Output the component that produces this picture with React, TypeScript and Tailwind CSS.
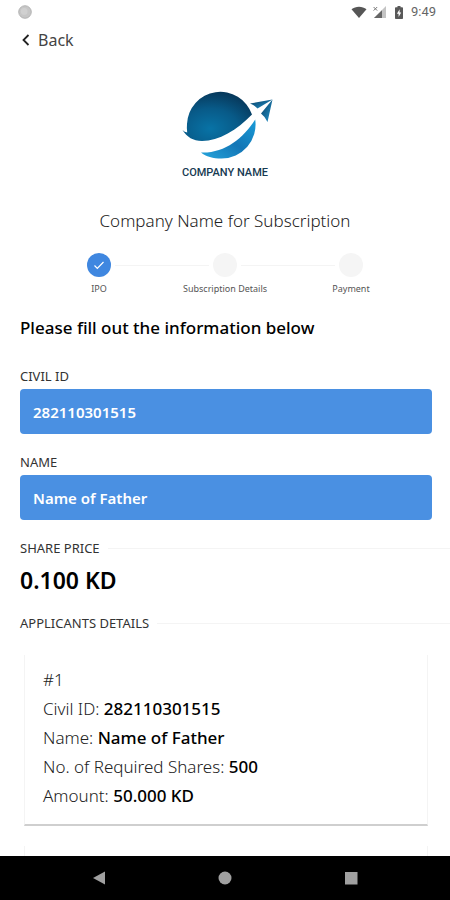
import { useState } from 'react'

const steps = ['IPO', 'Subscription Details', 'Payment']

const applicants = [
    { civilId: '282110301515', name: 'Name of Father', shares: '500', amount: '50.000 KD' },
]

function StatusBar() {
    return (
        <div className="flex h-6 shrink-0 items-center justify-between pl-[18px] pr-[14px]">
            <svg className="size-[14px]" viewBox="0 0 14 14">
                <circle cx="7" cy="7" r="6.3" fill="#c6c6c6" stroke="#b0b0b0" strokeWidth="0.9" />
                <circle cx="6.2" cy="6.4" r="3.4" fill="#d0d0d0" />
            </svg>
            <div className="flex items-center">
                <svg className="h-3 w-4" viewBox="0 0 16 12">
                    <path d="M0.5 3.2C4.6-0.2 11.4-0.2 15.5 3.2L8 12Z" fill="#565656" />
                </svg>
                <svg className="ml-[6px] h-3 w-[14px]" viewBox="0 0 14 12">
                    <path d="M13 0V12H1Z" fill="#c4c4c4" />
                    <path d="M9 4.2V12H1Z" fill="#666" />
                    <path d="M0.6 1L4.2 4.6M4.2 1L0.6 4.6" stroke="#777" strokeWidth="1" />
                </svg>
                <svg className="ml-2 h-[13px] w-2" viewBox="0 0 8 13">
                    <path d="M2.5 0H5.5V1.3H7.2Q8 1.3 8 2.2V12.2Q8 13 7.2 13H0.8Q0 13 0 12.2V2.2Q0 1.3 0.8 1.3H2.5Z" fill="#595959" />
                    <path d="M4.6 3.2L1.9 7.8H3.6V11L6.2 6.4H4.6Z" fill="#fff" />
                </svg>
                <span className="ml-2 font-['Roboto',sans-serif] text-[13px] leading-4 text-[#666]">9:49</span>
            </div>
        </div>
    )
}

function Logo() {
    return (
        <svg className="h-[72px] w-[96px]" viewBox="0 0 96 72" role="img" aria-label="Company Name">
            <defs>
                <radialGradient id="globe" cx="0.4" cy="0.75" r="0.75">
                    <stop offset="0" stopColor="#0873a6" />
                    <stop offset="0.55" stopColor="#085a88" />
                    <stop offset="1" stopColor="#07395c" />
                </radialGradient>
                <linearGradient id="swoosh" x1="0" y1="1" x2="1" y2="0">
                    <stop offset="0" stopColor="#25a5dc" />
                    <stop offset="0.5" stopColor="#1376b6" />
                    <stop offset="1" stopColor="#1a9cd8" />
                </linearGradient>
                <linearGradient id="wing" x1="0" y1="0" x2="1" y2="1">
                    <stop offset="0" stopColor="#0a3c60" />
                    <stop offset="1" stopColor="#2196cf" />
                </linearGradient>
            </defs>
            <path
                d="M5.5 42C10 49 16 53 25 53C42 53 60 42 75 26.5A33.4 33.4 0 0 0 10 36Q9.600 40 10.200 44.500Q7.500 44.300 5.500 42Z"
                fill="url(#globe)"
            />
            <path d="M78.200 31.500A34 34 0 0 1 44.500 70.500C36 70.500 29 68.500 24 64.500C47 65.500 66 51 78.200 31.500Z" fill="url(#swoosh)" />
            <path d="M73 15.500L95.500 11.500L80.500 20.500Q77.500 17 73 15.500Z" fill="url(#wing)" />
            <path d="M95.500 11.500L90.500 34Q88.500 29 84 25.500Z" fill="url(#wing)" />
        </svg>
    )
}

function Stepper({ current }: { current: number }) {
    return (
        <ol className="mx-9 mt-5 grid grid-cols-3">
            {steps.map((step, i) => (
                <li key={step} className="relative flex flex-col items-center">
                    {i > 0 && <span className="absolute right-1/2 top-3 mr-4 h-px w-[calc(100%-32px)] bg-[#f4f4f4]" />}
                    {i === current ? (
                        <span className="flex size-6 items-center justify-center rounded-full bg-[#3f87e0]">
                            <svg className="size-3" viewBox="0 0 12 12" fill="none">
                                <path d="M1.500 6.500L4.300 9.300L10.500 3" stroke="#fff" strokeWidth="1.200" />
                            </svg>
                        </span>
                    ) : (
                        <span className="size-6 rounded-full bg-[#f5f5f5]" />
                    )}
                    <span className="mt-1 whitespace-nowrap text-[9px] leading-4 text-[#555]">{step}</span>
                </li>
            ))}
        </ol>
    )
}

type FieldProps = {
    id: string
    label: string
    value: string
    onChange: (value: string) => void
}

function Field({ id, label, value, onChange }: FieldProps) {
    return (
        <div>
            <label htmlFor={id} className="block text-[13px] leading-4 text-[#333]">
                {label}
            </label>
            <input
                id={id}
                value={value}
                onChange={(e) => onChange(e.target.value)}
                className="mt-[5px] block h-[45px] w-full rounded-[4px] bg-[#4a90e2] px-[13px] text-[15px] font-semibold text-white outline-none"
            />
        </div>
    )
}

function SectionTitle({ children }: { children: string }) {
    return (
        <h2 className="flex items-center gap-2 pl-5 text-[13px] leading-4 text-[#333]">
            {children}
            <span className="h-px flex-1 bg-[#f4f4f4]" />
        </h2>
    )
}

function Row({ label, value }: { label: string; value: string }) {
    return (
        <p>
            {label}: <span className="font-medium text-black">{value}</span>
        </p>
    )
}

export default function App() {
    const [civilId, setCivilId] = useState('282110301515')
    const [name, setName] = useState('Name of Father')

    return (
        <div className="flex h-screen flex-col bg-white font-['Noto_Sans',sans-serif] text-[#222]">
            <StatusBar />
            <main className="min-h-0 flex-1 overflow-hidden">
                <button className="ml-[21px] mt-1 flex items-center gap-[7px] text-base leading-6 text-[#444]">
                    <svg className="h-3 w-[10px]" viewBox="0 0 10 12" fill="none">
                        <path d="M7.500 1L2.500 6L7.500 11" stroke="#222" strokeWidth="1.800" />
                    </svg>
                    Back
                </button>

                <div className="mt-9 flex flex-col items-center">
                    <Logo />
                    <p className="mt-[5px] font-['Roboto',sans-serif] text-[11px] font-medium leading-4 text-[#173a52]">COMPANY NAME</p>
                </div>

                <h1 className="mt-7 text-center text-[17px] font-light leading-6">Company Name for Subscription</h1>
                <Stepper current={0} />

                <p className="mt-[19px] px-5 text-[17px] font-medium leading-6 text-black">Please fill out the information below</p>

                <form className="mt-7 space-y-5 pl-5 pr-[18px]">
                    <Field id="civil-id" label="CIVIL ID" value={civilId} onChange={setCivilId} />
                    <Field id="name" label="NAME" value={name} onChange={setName} />
                </form>

                <div className="mt-5">
                    <SectionTitle>SHARE PRICE</SectionTitle>
                    <p className="mt-2 px-5 text-[23px] font-semibold leading-8 text-black">0.100 KD</p>
                </div>

                <div className="mt-[19px]">
                    <SectionTitle>APPLICANTS DETAILS</SectionTitle>
                    <div className="ml-6 mr-[22px] mt-6 space-y-5">
                        {applicants.map((applicant, i) => (
                            <div
                                key={i}
                                className="border-x border-b-2 border-x-[#f4f4f4] border-b-[#cfcfcf] px-[18px] pb-[14px] pt-[10px] text-[17px] font-light leading-[29px]"
                            >
                                <p>#{i + 1}</p>
                                <Row label="Civil ID" value={applicant.civilId} />
                                <Row label="Name" value={applicant.name} />
                                <Row label="No. of Required Shares" value={applicant.shares} />
                                <Row label="Amount" value={applicant.amount} />
                            </div>
                        ))}
                        <div className="h-[171px] border-x border-[#f4f4f4]" />
                    </div>
                </div>
            </main>
            <nav className="flex h-11 shrink-0 items-center justify-between bg-black px-[92px]">
                <button aria-label="Back">
                    <svg className="size-[14px]" viewBox="0 0 14 14">
                        <path d="M1 7L13 0.500V13.500Z" fill="#a0a0a0" />
                    </svg>
                </button>
                <button aria-label="Home">
                    <svg className="size-[14px]" viewBox="0 0 14 14">
                        <circle cx="7" cy="7" r="6.500" fill="#a0a0a0" />
                    </svg>
                </button>
                <button aria-label="Recent apps">
                    <svg className="size-[14px]" viewBox="0 0 14 14">
                        <rect x="1" y="1" width="12.500" height="12.500" fill="#a0a0a0" />
                    </svg>
                </button>
            </nav>
        </div>
    )
}
